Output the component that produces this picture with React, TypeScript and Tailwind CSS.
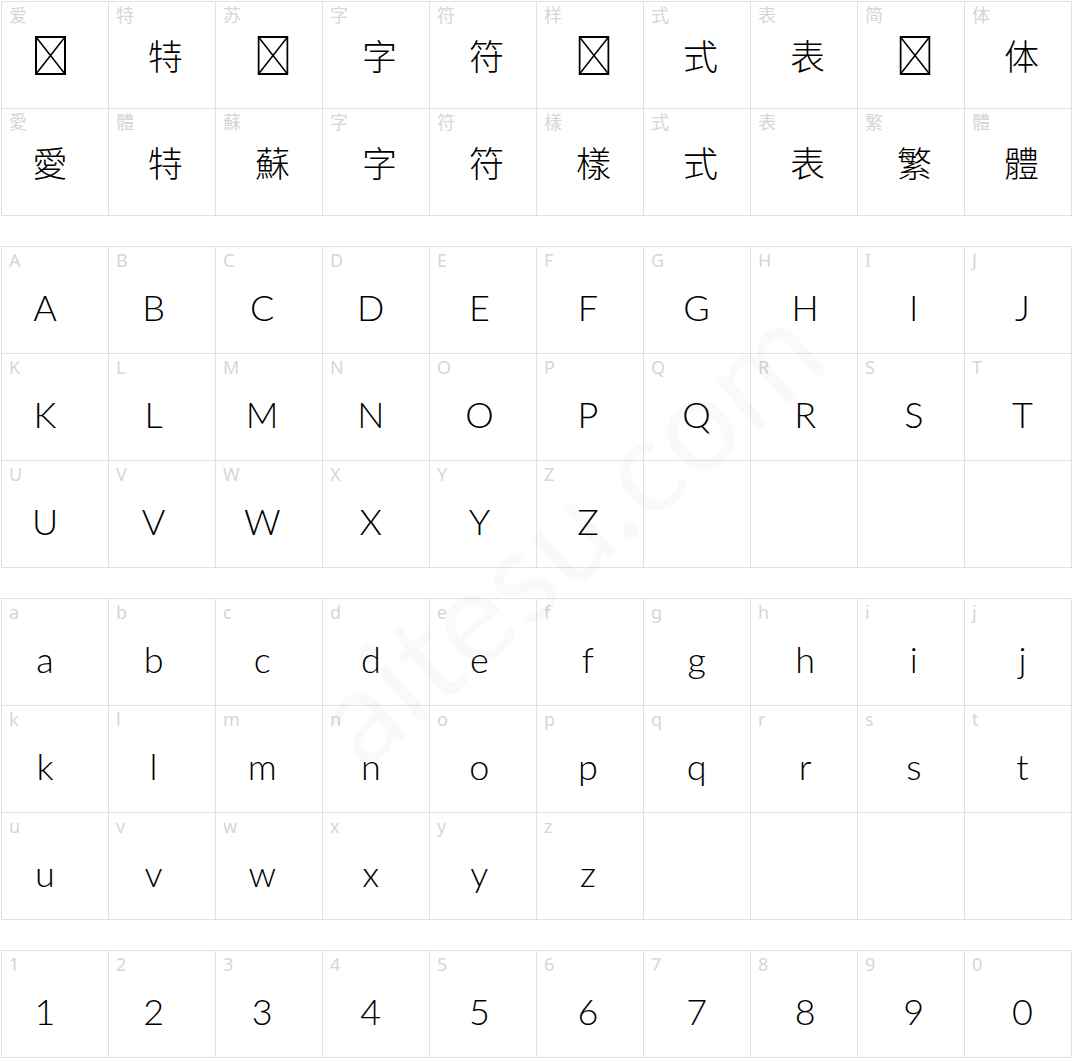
import React from 'react';

type Cell = { label: string; glyph: string; tofu?: boolean };

const cjkSimplified: Cell[] = [
  { label: '爱', glyph: '爱', tofu: true },
  { label: '特', glyph: '特' },
  { label: '苏', glyph: '苏', tofu: true },
  { label: '字', glyph: '字' },
  { label: '符', glyph: '符' },
  { label: '样', glyph: '样', tofu: true },
  { label: '式', glyph: '式' },
  { label: '表', glyph: '表' },
  { label: '简', glyph: '简', tofu: true },
  { label: '体', glyph: '体' },
];

const cjkTraditional: Cell[] = [
  { label: '愛', glyph: '愛' },
  { label: '體', glyph: '特' },
  { label: '蘇', glyph: '蘇' },
  { label: '字', glyph: '字' },
  { label: '符', glyph: '符' },
  { label: '樣', glyph: '樣' },
  { label: '式', glyph: '式' },
  { label: '表', glyph: '表' },
  { label: '繁', glyph: '繁' },
  { label: '體', glyph: '體' },
];

const toCells = (s: string): Cell[] => s.split('').map((c) => ({ label: c, glyph: c }));

const upper = toCells('ABCDEFGHIJKLMNOPQRSTUVWXYZ');
const lower = toCells('abcdefghijklmnopqrstuvwxyz');
const digits = toCells('1234567890');

// the missing-glyph box the font shows for simplified forms it lacks
const Tofu = () => (
  <svg width="31" height="39" viewBox="0 0 31 39" className="inline-block">
    <rect x="1" y="1" width="29" height="37" fill="none" stroke="#000" strokeWidth="2" />
    <path d="M1 1 L30 38 M30 1 L1 38" stroke="#000" strokeWidth="1.5" />
  </svg>
);

const GlyphCell = ({ cell, col, cjk }: { cell: Cell; col: number; cjk: boolean }) => {
  const dx = cjk ? (col === 0 ? -5 : 3.5) : -10 + col * 1.6;
  return (
    <div className="h-[107px] border-r border-b border-[#e2e2e2]">
      <div className="h-[31px] pl-[7px] pt-[4px] text-[18px] leading-[18px] text-[#d6d6d6] font-['Noto_Sans','Noto_Sans_CJK_SC',sans-serif]">
        {cell.label}
      </div>
      {cjk ? (
        <div
          className="flex h-[44px] items-center justify-center text-[35px] font-light leading-[44px] text-black font-['Noto_Sans_CJK_TC',sans-serif]"
          style={{ transform: `translateX(${dx}px)` }}
        >
          {cell.tofu ? <Tofu /> : cell.glyph}
        </div>
      ) : (
        <div
          className="mt-[7px] text-center text-[36px] font-light leading-[44px] text-black font-['Lato',sans-serif]"
          style={{ transform: `translateX(${dx}px)` }}
        >
          {cell.glyph}
        </div>
      )}
    </div>
  );
};

const Section = ({ cells, cjk = false }: { cells: Cell[]; cjk?: boolean }) => {
  const padded = [...cells];
  while (padded.length % 10 !== 0) padded.push({ label: '', glyph: '' });
  return (
    <div className="grid w-fit grid-cols-[repeat(10,107px)] border-l border-t border-[#e2e2e2]">
      {padded.map((cell, i) => (
        <GlyphCell key={i} cell={cell} col={i % 10} cjk={cjk} />
      ))}
    </div>
  );
};

export default function App() {
  return (
    <div className="relative h-[1062px] w-[1074px] overflow-hidden bg-white pl-[1px] pt-[1px]">
      <div className="flex flex-col gap-[30px]">
        <Section cells={[...cjkSimplified, ...cjkTraditional]} cjk />
        <Section cells={upper} />
        <Section cells={lower} />
        <Section cells={digits} />
      </div>

      <div className="pointer-events-none absolute left-[565px] top-[530px] -translate-x-1/2 -translate-y-1/2 -rotate-[41deg] whitespace-nowrap text-[132px] leading-none text-black/[0.025] font-['Lato',sans-serif]">
        aitesu.com
      </div>
    </div>
  );
}
